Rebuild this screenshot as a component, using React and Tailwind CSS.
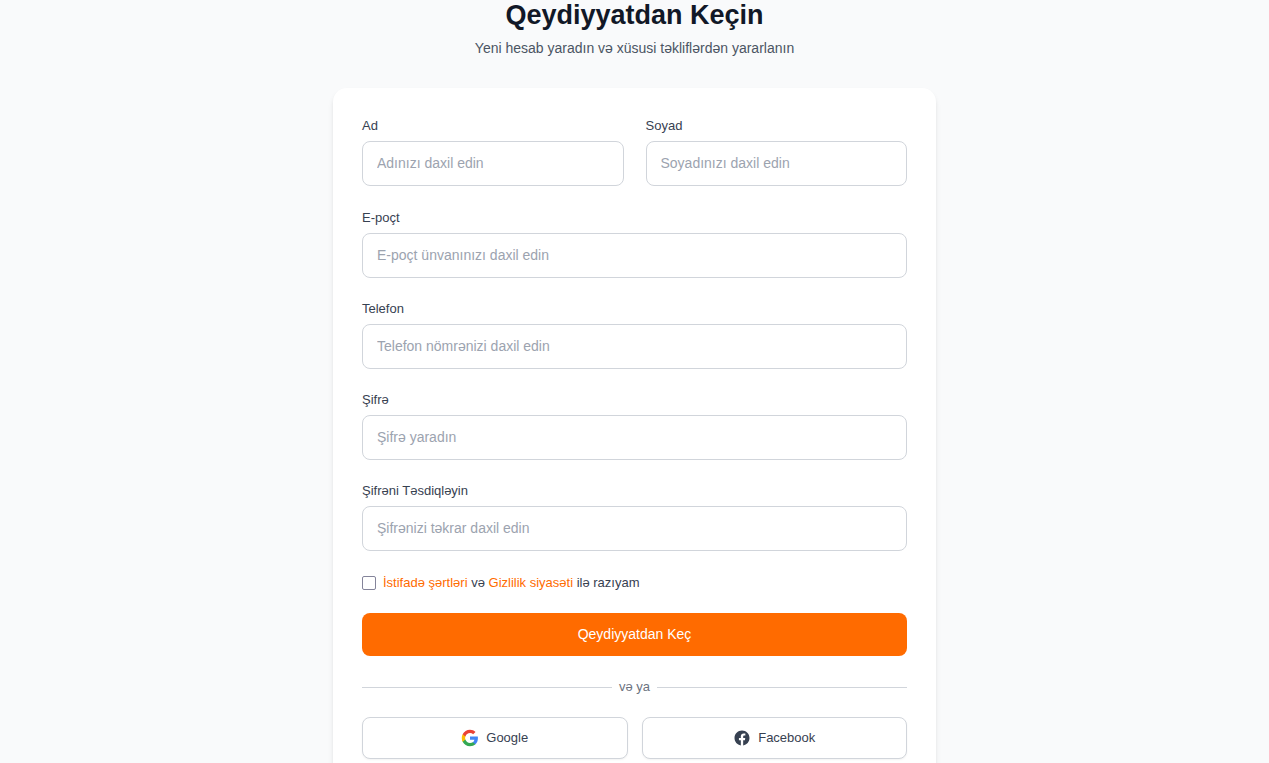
function Field({ id, label, ...inputProps }) {
  return (
    <div className="min-w-0">
      <label htmlFor={id} className="mb-[6px] block text-[13px] leading-[18px] text-[#374151]">
        {label}
      </label>
      <input
        id={id}
        name={id}
        className="block h-[45px] w-full rounded-lg border border-[#d1d5db] bg-white px-[14px] pb-[2px] text-[14px] text-[#111827] placeholder:text-[#9ca3af] focus:border-[#ff6b00] focus:outline-none"
        {...inputProps}
      />
    </div>
  );
}

function GoogleIcon() {
  return (
    <svg viewBox="0 0 24 24" className="size-[18px]" aria-hidden="true">
      <path
        fill="#4285F4"
        d="M22.56 12.25c0-.78-.07-1.53-.2-2.25H12v4.26h5.92c-.26 1.37-1.04 2.53-2.21 3.31v2.77h3.57c2.08-1.92 3.28-4.74 3.28-8.09z"
      />
      <path
        fill="#34A853"
        d="M12 23c2.97 0 5.46-.98 7.28-2.66l-3.57-2.77c-.98.66-2.23 1.06-3.71 1.06-2.86 0-5.29-1.93-6.16-4.53H2.18v2.84C3.99 20.53 7.7 23 12 23z"
      />
      <path
        fill="#FBBC05"
        d="M5.84 14.09c-.22-.66-.35-1.36-.35-2.09s.13-1.43.35-2.09V7.07H2.18C1.43 8.55 1 10.22 1 12s.43 3.45 1.18 4.93l2.85-2.22.81-.62z"
      />
      <path
        fill="#EA4335"
        d="M12 5.38c1.62 0 3.06.56 4.21 1.64l3.15-3.15C17.45 2.09 14.97 1 12 1 7.7 1 3.99 3.47 2.18 7.07l3.66 2.84c.87-2.6 3.3-4.53 6.16-4.53z"
      />
    </svg>
  );
}

function FacebookIcon() {
  return (
    <svg viewBox="0 0 24 24" fill="currentColor" className="size-[18px]" aria-hidden="true">
      <path d="M22 12c0-5.523-4.477-10-10-10S2 6.477 2 12c0 4.991 3.657 9.128 8.438 9.878v-6.987h-2.54V12h2.54V9.797c0-2.506 1.492-3.89 3.777-3.89 1.094 0 2.238.195 2.238.195v2.46h-1.26c-1.243 0-1.63.771-1.63 1.562V12h2.773l-.443 2.89h-2.33v6.988C18.343 21.128 22 16.991 22 12z" />
    </svg>
  );
}

function SocialButton({ icon, children }) {
  return (
    <button
      type="button"
      className="flex h-[42px] items-center justify-center gap-[7px] rounded-lg border border-[#d1d5db] bg-white text-[13px] text-[#374151] shadow-xs hover:bg-[#f9fafb]"
    >
      {icon}
      {children}
    </button>
  );
}

export default function App() {
  return (
    <main className="h-screen overflow-hidden bg-[#f9fafb] font-['Liberation_Sans',Arial,sans-serif]">
      <div className="mx-auto max-w-[603px]">
        <header className="text-center">
          <h1 className="text-[27px] leading-[30px] font-bold text-[#111827]">Qeydiyyatdan Keçin</h1>
          <p className="mt-[7px] text-[14px] leading-[22px] text-[#4b5563]">
            Yeni hesab yaradın və xüsusi təkliflərdən yararlanın
          </p>
        </header>

        <div className="mt-[29px] rounded-[14px] bg-white p-[29px] shadow-md">
          <form onSubmit={(event) => event.preventDefault()}>
            <div className="grid grid-cols-2 gap-[22px]">
              <Field id="firstName" label="Ad" type="text" placeholder="Adınızı daxil edin" />
              <Field id="lastName" label="Soyad" type="text" placeholder="Soyadınızı daxil edin" />
            </div>
            <div className="mt-[23px] flex flex-col gap-[22px]">
              <Field id="email" label="E-poçt" type="email" placeholder="E-poçt ünvanınızı daxil edin" />
              <Field id="phone" label="Telefon" type="tel" placeholder="Telefon nömrənizi daxil edin" />
              <Field id="password" label="Şifrə" type="password" placeholder="Şifrə yaradın" />
              <Field
                id="confirmPassword"
                label="Şifrəni Təsdiqləyin"
                type="password"
                placeholder="Şifrənizi təkrar daxil edin"
              />
            </div>

            <div className="mt-[23px] flex items-center gap-[7px]">
              <input
                id="terms"
                name="terms"
                type="checkbox"
                className="size-[14px] appearance-none rounded-[2px] border border-[#84849a] bg-white checked:border-[#ff6b00] checked:bg-[#ff6b00]"
              />
              <label htmlFor="terms" className="text-[13px] leading-[18px] text-[#374151]">
                <a href="#terms" className="text-[#ff6b00] hover:underline">İstifadə şərtləri</a> və{" "}
                <a href="#privacy" className="text-[#ff6b00] hover:underline">Gizlilik siyasəti</a> ilə razıyam
              </label>
            </div>

            <button
              type="submit"
              className="mt-[21px] h-[43px] w-full rounded-lg bg-[#ff6b00] text-[14px] text-white hover:bg-[#e66000]"
            >
              Qeydiyyatdan Keç
            </button>
          </form>

          <div className="mt-[22px] flex items-center gap-[7px] text-[13px] leading-[18px] text-[#6b7280]">
            <span className="h-px flex-1 bg-[#d1d5db]" />
            <span>və ya</span>
            <span className="h-px flex-1 bg-[#d1d5db]" />
          </div>

          <div className="mt-[21px] grid grid-cols-2 gap-[14px]">
            <SocialButton icon={<GoogleIcon />}>Google</SocialButton>
            <SocialButton icon={<FacebookIcon />}>Facebook</SocialButton>
          </div>
        </div>
      </div>
    </main>
  );
}
